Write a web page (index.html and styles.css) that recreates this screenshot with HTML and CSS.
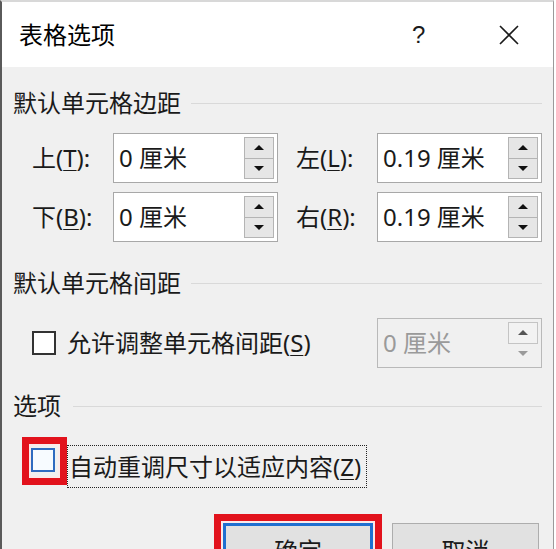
FILE: index.html
```html
<!DOCTYPE html>
<html lang="zh-CN">
<head>
<meta charset="utf-8">
<title>表格选项</title>
<link rel="stylesheet" href="styles.css">
</head>
<body>
<div class="dialog">
  <div class="titlebar">
    <span class="title">表格选项</span>
    <span class="help">?</span>
    <span class="close">
      <svg width="20" height="20" viewBox="0 0 20 20"><path d="M1 1 L19 19 M19 1 L1 19" stroke="#1a1a1a" stroke-width="1.6" fill="none"/></svg>
    </span>
  </div>
  <div class="content">
    <div class="group-head"><span>默认单元格边距</span><i class="rule"></i></div>
    <div class="margins">
      <span class="lbl">上(<u>T</u>):</span>
      <div class="spin"><span class="val">0 厘米</span><span class="btns"><span class="b"><i class="up"></i></span><span class="b"><i class="down"></i></span></span></div>
      <span></span>
      <span class="lbl">左(<u>L</u>):</span>
      <div class="spin"><span class="val">0.19 厘米</span><span class="btns"><span class="b"><i class="up"></i></span><span class="b"><i class="down"></i></span></span></div>
      <span class="lbl">下(<u>B</u>):</span>
      <div class="spin"><span class="val">0 厘米</span><span class="btns"><span class="b"><i class="up"></i></span><span class="b"><i class="down"></i></span></span></div>
      <span></span>
      <span class="lbl">右(<u>R</u>):</span>
      <div class="spin"><span class="val">0.19 厘米</span><span class="btns"><span class="b"><i class="up"></i></span><span class="b"><i class="down"></i></span></span></div>
    </div>

    <div class="group-head g2"><span>默认单元格间距</span><i class="rule"></i></div>
    <div class="spacing-row">
      <span class="check"></span>
      <span class="check-text">允许调整单元格间距(<u>S</u>)</span>
      <span class="grow"></span>
      <div class="spin disabled"><span class="val">0 厘米</span><span class="btns"><span class="b"><i class="up"></i></span><span class="b flat"><i class="down"></i></span></span></div>
    </div>

    <div class="group-head g3"><span>选项</span><i class="rule"></i></div>
    <div class="option-row">
      <span class="check focus"><span class="ring ring-check"></span></span>
      <span class="focus-text">自动重调尺寸以适应内容(<u>Z</u>)</span>
    </div>

    <div class="buttons">
      <button class="btn primary">确定<span class="ring ring-btn"></span></button>
      <button class="btn cancel">取消</button>
    </div>
  </div>
</div>
</body>
</html>
```
FILE: styles.css
```css
html, body {
  margin: 0;
  padding: 0;
  background: #ffffff;
}
body {
  width: 556px;
  height: 549px;
  overflow: hidden;
  font-family: "Noto Sans", "Noto Sans CJK SC", sans-serif;
  color: #1a1a1a;
}
.dialog {
  width: 554px;
  height: 549px;
  box-sizing: border-box;
  border-left: 2px solid #5a5a5a;
  border-right: 1px solid #9a9a9a;
  border-top: 2px solid #d8d8d8;
  overflow: hidden;
  background: #f0f0f0;
}
.titlebar {
  height: 65px;
  background: #ffffff;
  display: flex;
  align-items: center;
  font-size: 24px;
}
.title {
  flex: 1;
  padding-left: 17px;
  color: #000;
  line-height: 30px;
}
.help {
  width: 11px;
  line-height: 30px;
  color: #1a1a1a;
  font-family: "Liberation Sans", sans-serif;
  margin-right: 76px;
}
.close {
  display: flex;
  width: 20px;
  height: 20px;
  margin-right: 34px;
}
.content {
  padding: 0 11px;
  font-size: 24px;
}
.group-head {
  display: flex;
  align-items: center;
  height: 30px;
  line-height: 30px;
  gap: 10px;
  margin-top: 21px;
  white-space: nowrap;
}
.group-head.g2 { margin-top: 26px; }
.group-head.g3 { margin-top: 23px; gap: 12px; }
.rule {
  flex: 1;
  height: 1px;
  background: #d9d9d9;
}
.margins {
  margin-top: 15px;
  margin-left: 19px;
  display: grid;
  grid-template-columns: 81px 165px 18px 81px 165px;
  grid-auto-rows: 50px;
  row-gap: 9px;
  align-items: center;
}
.lbl {
  line-height: 30px;
  white-space: nowrap;
}
u {
  text-decoration-thickness: 1px;
  text-underline-offset: 3px;
}
.spin {
  height: 50px;
  box-sizing: border-box;
  border: 1px solid #a8a8a8;
  background: #ffffff;
  display: flex;
  align-items: center;
  padding: 3px 3px 3px 5px;
}
.spin .val {
  flex: 1;
  line-height: 30px;
  white-space: nowrap;
}
.btns {
  width: 30px;
  align-self: stretch;
  display: flex;
  flex-direction: column;
}
.btns .b {
  flex: 1;
  box-sizing: border-box;
  border: 1px solid #b4b4b4;
  background: #e6e6e6;
  display: flex;
  align-items: center;
  justify-content: center;
}
.btns .b + .b { border-top: none; }
.up {
  width: 0; height: 0;
  border-left: 5px solid transparent;
  border-right: 5px solid transparent;
  border-bottom: 5px solid #111;
}
.down {
  width: 0; height: 0;
  border-left: 5px solid transparent;
  border-right: 5px solid transparent;
  border-top: 5px solid #111;
}
.spacing-row {
  margin-top: 20px;
  height: 50px;
  display: flex;
  align-items: center;
}
.check {
  width: 24px;
  height: 24px;
  box-sizing: border-box;
  border: 2px solid #333333;
  background: #ffffff;
  margin-left: 19px;
  flex: none;
}
.check-text {
  margin-left: 11px;
  line-height: 30px;
  white-space: nowrap;
}
.grow { flex: 1; }
.spin.disabled {
  width: 165px;
  background: #f0f0f0;
  border-color: #b9b9b9;
  color: #9a9a9a;
}
.spin.disabled .b {
  background: #f2f2f2;
  border-color: #c4c4c4;
}
.spin.disabled .b.flat {
  border-color: transparent;
  background: transparent;
}
.spin.disabled .up { border-bottom-color: #555; }
.spin.disabled .down { border-top-color: #9a9a9a; }
.option-row {
  margin-top: 24px;
  height: 43px;
  display: flex;
  align-items: flex-start;
}
.check.focus {
  position: relative;
  margin-left: 18px;
  margin-top: 3px;
  border-color: #2f6bc0;
  background: #f7fbff;
}
.focus-text {
  margin-left: 12px;
  height: 43px;
  box-sizing: border-box;
  border: 1px dotted #222;
  padding: 0 5px 0 1px;
  line-height: 41px;
  white-space: nowrap;
}
.ring {
  position: absolute;
  box-sizing: border-box;
  border: 7px solid #e2121c;
  box-shadow: inset 0 0 0 2px #fbeaea;
  pointer-events: none;
}
.ring-check {
  left: -11px;
  top: -13px;
  width: 45px;
  height: 48px;
}
.ring-btn {
  left: -12px;
  top: -12px;
  right: -12px;
  bottom: -12px;
}
.buttons {
  margin-top: 35px;
  display: flex;
  justify-content: flex-end;
  gap: 19px;
  padding-right: 3px;
}
.btn {
  position: relative;
  height: 56px;
  box-sizing: border-box;
  font-family: "Noto Sans", "Noto Sans CJK SC", sans-serif;
  font-size: 24px;
  color: #1a1a1a;
  background: #e1e1e1;
  border: 1px solid #adadad;
  padding: 0;
  line-height: 30px;
}
.btn.primary {
  width: 150px;
  border: 3px solid #1f6fd0;
}
.btn.cancel {
  width: 147px;
}
```
